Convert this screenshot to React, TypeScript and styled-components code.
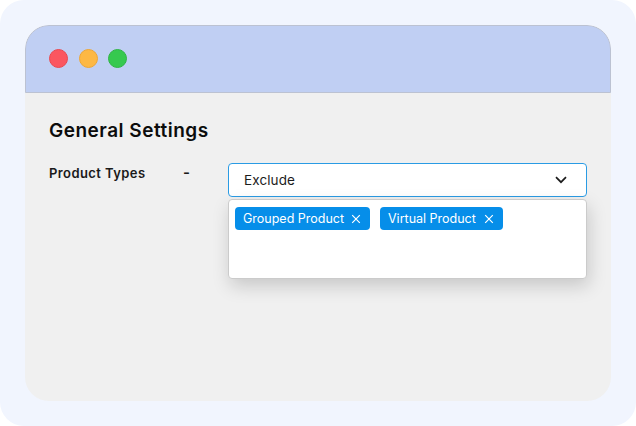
import React from 'react'
import styled, { createGlobalStyle } from 'styled-components'

const GlobalStyle = createGlobalStyle`
  html, body {
    margin: 0;
    padding: 0;
    background: #fff;
    font-family: "Inter", "Liberation Sans", sans-serif;
  }
`

const Frame = styled.div`
  width: 636px;
  height: 426px;
  box-sizing: border-box;
  padding: 25px;
  background: #f1f5fe;
  border-radius: 24px;
`

const Window = styled.div`
  width: 586px;
  height: 376px;
  background: #f0f0f0;
  border-radius: 24px;
  overflow: hidden;
`

const TitleBar = styled.div`
  height: 68px;
  box-sizing: border-box;
  display: flex;
  align-items: center;
  gap: 10.5px;
  padding: 0 23px 2px;
  background: #c0cff3;
  border: 1px solid #bcc2d2;
  border-radius: 24px 24px 0 0;
`

const Dot = styled.span<{ $fill: string; $edge: string }>`
  width: 19px;
  height: 19px;
  box-sizing: border-box;
  border-radius: 50%;
  background: ${(p) => p.$fill};
  border: 1px solid ${(p) => p.$edge};
`

const Content = styled.div`
  padding: 26px 24px 0;
`

const Heading = styled.h1`
  margin: 0 0 20px;
  font-size: 19px;
  line-height: 24px;
  font-weight: 600;
  letter-spacing: 0.5px;
  color: #0c0c0c;
`

const Row = styled.div`
  display: flex;
  align-items: flex-start;
`

const Label = styled.div`
  width: 134px;
  padding-top: 1px;
  font-size: 13px;
  line-height: 18px;
  font-weight: 600;
  letter-spacing: 0.42px;
  color: #1a1a1a;
`

const Dash = styled.div`
  width: 45px;
  padding-top: 1px;
  font-size: 15px;
  line-height: 18px;
  font-weight: 600;
  color: #1a1a1a;
`

const Field = styled.div`
  width: 359px;
  display: flex;
  flex-direction: column;
  gap: 2px;
`

const Select = styled.div`
  height: 34px;
  box-sizing: border-box;
  display: flex;
  align-items: center;
  justify-content: space-between;
  padding: 0 19px 0 15px;
  background: #fff;
  border: 1.5px solid #2a9be4;
  border-radius: 4px;
  font-size: 13.5px;
  font-weight: 400;
  letter-spacing: 0.1px;
  color: #1c1c1c;
`

const Menu = styled.div`
  height: 80px;
  box-sizing: border-box;
  display: flex;
  align-items: flex-start;
  gap: 10px;
  padding: 7px 6px;
  background: #fff;
  border: 1px solid #cbcbcb;
  border-radius: 4px;
  box-shadow: 2px 7px 18px rgba(0, 0, 0, 0.17);
`

const Tag = styled.div<{ $width: number }>`
  width: ${(p) => p.$width}px;
  height: 23px;
  box-sizing: border-box;
  display: flex;
  align-items: center;
  justify-content: space-between;
  padding: 0 9px 0 8px;
  background: #068ee9;
  border-radius: 4px;
  font-size: 12.5px;
  color: #fff;
  white-space: nowrap;
`

const tags = [
  { name: 'Grouped Product', width: 135 },
  { name: 'Virtual Product', width: 123 },
]

const CloseIcon = () => (
  <svg width="10" height="10" viewBox="0 0 10 10" fill="none" stroke="#fff" strokeWidth="1.2">
    <path d="M1.2 1.2 8.8 8.8M8.8 1.2 1.2 8.8" />
  </svg>
)

const ChevronIcon = () => (
  <svg width="12" height="8" viewBox="0 0 12 8" fill="none" stroke="#1c1c1c" strokeWidth="1.7">
    <path d="M1 1.2 6 6.2 11 1.2" />
  </svg>
)

export default function App() {
  return (
    <>
      <GlobalStyle />
      <Frame>
        <Window>
          <TitleBar>
            <Dot $fill="#fb5660" $edge="#e9484f" />
            <Dot $fill="#fdb844" $edge="#eda635" />
            <Dot $fill="#36c94f" $edge="#2fb444" />
          </TitleBar>
          <Content>
            <Heading>General Settings</Heading>
            <Row>
              <Label>Product Types</Label>
              <Dash>-</Dash>
              <Field>
                <Select>
                  Exclude
                  <ChevronIcon />
                </Select>
                <Menu>
                  {tags.map((t) => (
                    <Tag key={t.name} $width={t.width}>
                      {t.name}
                      <CloseIcon />
                    </Tag>
                  ))}
                </Menu>
              </Field>
            </Row>
          </Content>
        </Window>
      </Frame>
    </>
  )
}
